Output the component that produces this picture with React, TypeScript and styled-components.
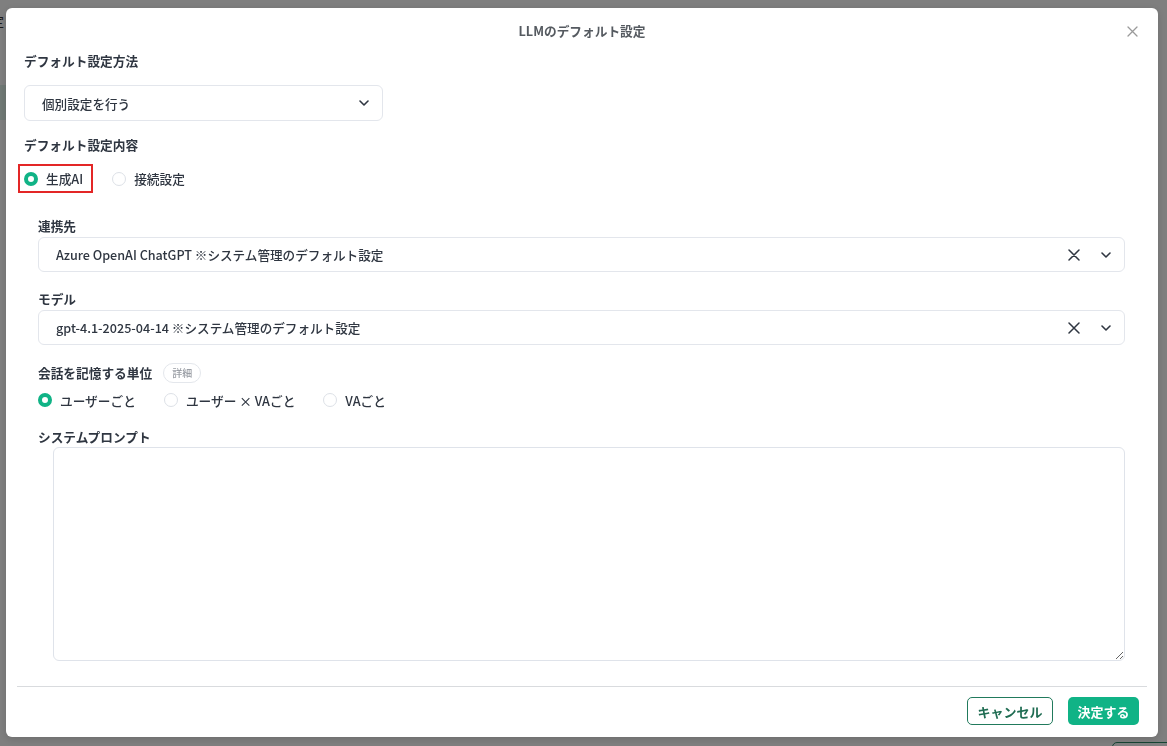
import React from "react";
import styled, { createGlobalStyle } from "styled-components";

const GlobalStyle = createGlobalStyle`
  html, body {
    margin: 0;
    padding: 0;
    overflow: hidden;
  }
  body {
    font-family: "Noto Sans CJK JP", "Noto Sans", sans-serif;
    color: #2f3641;
    background: #ffffff;
  }
  * {
    box-sizing: border-box;
  }
`;

const ChevronDown = () => (
  <svg width="10" height="6" viewBox="0 0 10 6" fill="none">
    <path d="M1 1l4 4 4-4" stroke="#2f3641" strokeWidth="1.6" strokeLinecap="round" strokeLinejoin="round" />
  </svg>
);

const ClearIcon = () => (
  <svg width="12" height="12" viewBox="0 0 12 12" fill="none">
    <path d="M1 1l10 10M11 1L1 11" stroke="#2f3641" strokeWidth="1.5" strokeLinecap="round" />
  </svg>
);

const CloseIcon = () => (
  <svg width="11" height="11" viewBox="0 0 11 11" fill="none">
    <path d="M1 1l9 9M10 1L1 10" stroke="#9a9a9a" strokeWidth="1.3" strokeLinecap="round" />
  </svg>
);

const App = () => {
  return (
    <>
      <GlobalStyle />
      <BgPage>
        <BgText>設定</BgText>
        <BgStrip />
        <BgFooter>
          <BgButton />
        </BgFooter>
      </BgPage>
      <Overlay>
        <Modal>
          <Header>
            <Title>LLMのデフォルト設定</Title>
            <CloseButton>
              <CloseIcon />
            </CloseButton>
          </Header>
          <Body>
            <Label>デフォルト設定方法</Label>
            <Select $width="359px" $height="36px" $mt="15px">
              <SelectValue>個別設定を行う</SelectValue>
              <Chevron>
                <ChevronDown />
              </Chevron>
            </Select>
            <Label $mt="15px">デフォルト設定内容</Label>
            <RadioGroup $mt="10px" $gap="19px">
              <Highlight>
                <RadioItem>
                  <Radio $checked />
                  <RadioLabel>生成AI</RadioLabel>
                </RadioItem>
              </Highlight>
              <RadioItem>
                <Radio />
                <RadioLabel>接続設定</RadioLabel>
              </RadioItem>
            </RadioGroup>

            <Section>
              <Label $mt="24px">連携先</Label>
              <Select $height="35px" $mt="2px">
                <SelectValue>Azure OpenAI ChatGPT ※システム管理のデフォルト設定</SelectValue>
                <Clear>
                  <ClearIcon />
                </Clear>
                <Chevron>
                  <ChevronDown />
                </Chevron>
              </Select>

              <Label $mt="18px">モデル</Label>
              <Select $height="35px" $mt="2px">
                <SelectValue>gpt-4.1-2025-04-14 ※システム管理のデフォルト設定</SelectValue>
                <Clear>
                  <ClearIcon />
                </Clear>
                <Chevron>
                  <ChevronDown />
                </Chevron>
              </Select>

              <LabelRow>
                <Label>会話を記憶する単位</Label>
                <Badge>詳細</Badge>
              </LabelRow>
              <RadioGroup $mt="8px" $gap="28px">
                <RadioItem>
                  <Radio $checked />
                  <RadioLabel>ユーザーごと</RadioLabel>
                </RadioItem>
                <RadioItem>
                  <Radio />
                  <RadioLabel>ユーザー × VAごと</RadioLabel>
                </RadioItem>
                <RadioItem>
                  <Radio />
                  <RadioLabel>VAごと</RadioLabel>
                </RadioItem>
              </RadioGroup>

              <Label $mt="19px">システムプロンプト</Label>
              <Prompt />
            </Section>
          </Body>
          <Divider />
          <Footer>
            <CancelButton>キャンセル</CancelButton>
            <SubmitButton>決定する</SubmitButton>
          </Footer>
        </Modal>
      </Overlay>
    </>
  );
};

export default App;

const BgPage = styled.div`
  height: 100vh;
  display: flex;
  flex-direction: column;
`;

const BgText = styled.div`
  margin: 12px 0 0 -22px;
  font-size: 13px;
  line-height: 18px;
  color: #333;
`;

const BgStrip = styled.div`
  margin-top: 55px;
  width: 300px;
  height: 35px;
  background: #e0f2ea;
`;

const BgFooter = styled.div`
  margin-top: auto;
  display: flex;
  justify-content: flex-end;
  margin-right: -20px;
  height: 4px;
`;

const BgButton = styled.div`
  width: 75px;
  height: 28px;
  border: 1px solid #2f8a69;
  border-radius: 5px;
`;

const Overlay = styled.div`
  position: fixed;
  inset: 0;
  background: rgba(0, 0, 0, 0.5);
  padding: 8px 9px 9px 6px;
`;

const Modal = styled.div`
  width: 1152px;
  height: 729px;
  background: #ffffff;
  border-radius: 6px;
  display: flex;
  flex-direction: column;
  box-shadow: 0 2px 8px rgba(0, 0, 0, 0.15);
`;

const Header = styled.div`
  position: relative;
  padding-top: 14px;
  display: flex;
  justify-content: center;
`;

const Title = styled.div`
  font-size: 12.7px;
  line-height: 18px;
  font-weight: 700;
  color: #555a60;
`;

const CloseButton = styled.div`
  position: absolute;
  right: 20px;
  top: 18px;
  display: flex;
  cursor: pointer;
`;

const Body = styled.div`
  padding: 12px 33px 0 18px;
  display: flex;
  flex-direction: column;
  flex: 1;
`;

const Label = styled.div<{ $mt?: string }>`
  margin-top: ${(p) => p.$mt || "0"};
  font-size: 12.7px;
  line-height: 18px;
  font-weight: 700;
  color: #2f3641;
`;

const LabelRow = styled.div`
  margin-top: 18px;
  height: 20px;
  display: flex;
  align-items: center;
  gap: 11px;
`;

const Badge = styled.span`
  height: 20px;
  padding: 0 8px;
  border: 1px solid #e4e7ec;
  border-radius: 10px;
  font-size: 10px;
  line-height: 18px;
  color: #9a9ea5;
  font-weight: 500;
`;

const Select = styled.div<{ $width?: string; $height: string; $mt: string }>`
  margin-top: ${(p) => p.$mt};
  width: ${(p) => p.$width || "100%"};
  height: ${(p) => p.$height};
  border: 1px solid #e3e6ec;
  border-radius: 6px;
  display: flex;
  align-items: center;
  padding: 0 13px 0 17px;
  background: #fff;
`;

const SelectValue = styled.span`
  flex: 1;
  font-size: 12.6px;
  font-weight: 500;
  color: #2f3641;
  white-space: nowrap;
`;

const Clear = styled.span`
  display: flex;
  margin-right: 21px;
`;

const Chevron = styled.span`
  display: flex;
`;

const RadioGroup = styled.div<{ $mt: string; $gap: string }>`
  margin-top: ${(p) => p.$mt};
  display: flex;
  align-items: center;
  gap: ${(p) => p.$gap};
`;

const Highlight = styled.div`
  margin-left: -6px;
  height: 29px;
  border: 2px solid #e32626;
  padding: 0 8px 0 4px;
  display: flex;
  align-items: center;
`;

const RadioItem = styled.label`
  display: flex;
  align-items: center;
  gap: 8px;
  height: 18px;
`;

const Radio = styled.span<{ $checked?: boolean }>`
  width: 14px;
  height: 14px;
  border-radius: 50%;
  border: ${(p) => (p.$checked ? "4px solid #10b386" : "1px solid #dde1e7")};
  background: #fff;
`;

const RadioLabel = styled.span`
  font-size: 12.7px;
  font-weight: 500;
  color: #2f3641;
`;

const Section = styled.div`
  padding-left: 14px;
  display: flex;
  flex-direction: column;
`;

const Prompt = styled.textarea`
  margin: 1px 0 0 15px;
  height: 214px;
  border: 1px solid #dfe3ea;
  border-radius: 6px;
  resize: vertical;
  outline: none;
  font-family: inherit;
`;

const Divider = styled.div`
  margin: 0 11px;
  height: 1px;
  background: #d9dbde;
`;

const Footer = styled.div`
  padding: 10px 19px 12px 0;
  display: flex;
  justify-content: flex-end;
  gap: 15px;
`;

const CancelButton = styled.button`
  width: 86px;
  height: 28px;
  border: 1px solid #217a5c;
  border-radius: 5px;
  background: #fff;
  color: #1f6c52;
  font-family: inherit;
  font-size: 13px;
  font-weight: 700;
  cursor: pointer;
`;

const SubmitButton = styled.button`
  width: 71px;
  height: 28px;
  border: none;
  border-radius: 5px;
  background: #10b386;
  color: #fff;
  font-family: inherit;
  font-size: 13px;
  font-weight: 700;
  cursor: pointer;
`;
